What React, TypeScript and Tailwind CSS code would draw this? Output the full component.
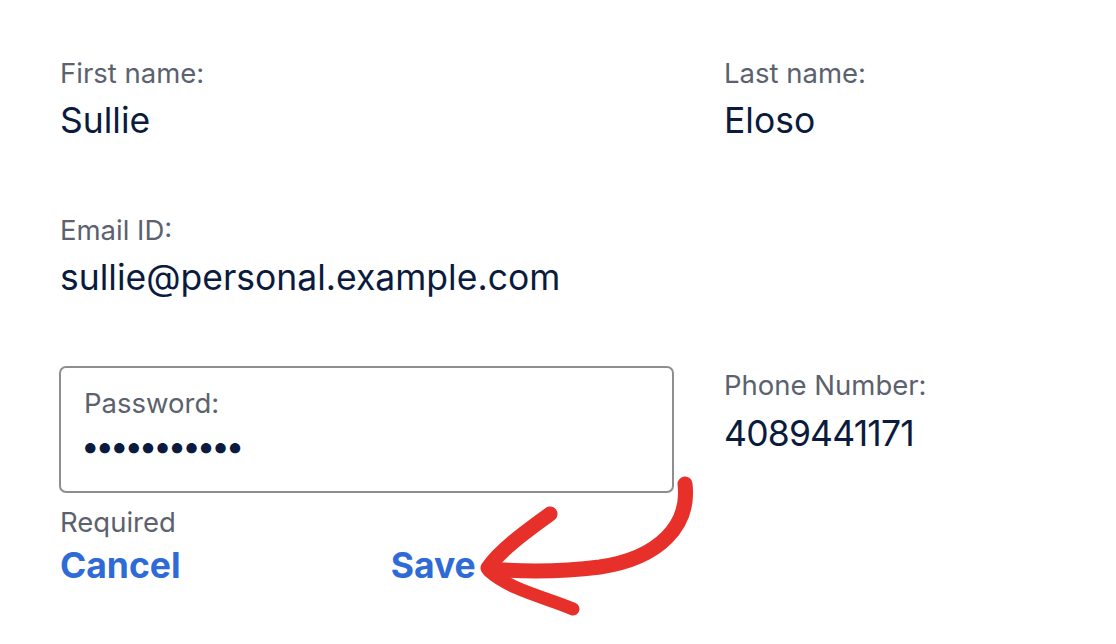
import React from "react";

function Field({ label, value }: { label: string; value: string }) {
  return (
    <div className="flex flex-col">
      <div className="text-[27.5px] leading-[30px] text-[#5b626e]">{label}</div>
      <div className="mt-[13px] text-[35.5px] leading-[40px] text-[#0a1b3d]">{value}</div>
    </div>
  );
}

export default function App() {
  return (
    <div
      className="relative w-[1116px] h-[644px] bg-white overflow-hidden"
      style={{ fontFamily: "Inter, 'Noto Sans', sans-serif" }}
    >
      <div className="flex flex-col pl-[60px] pt-[58px]">
        <div className="grid grid-cols-[664px_1fr]">
          <Field label="First name:" value="Sullie" />
          <Field label="Last name:" value="Eloso" />
        </div>
        <div className="mt-[74px]">
          <Field label="Email ID:" value="sullie@personal.example.com" />
        </div>
        <div className="mt-[68px] grid grid-cols-[664px_1fr]">
          <div className="flex flex-col">
            <div className="ml-[-1px] w-[615px] h-[127px] rounded-[7px] border-2 border-[#8e8e8e] pl-[23px] pt-[20px]">
              <div className="text-[27.5px] leading-[30px] text-[#5b626e]">Password:</div>
              <div className="mt-[10px] ml-[-3px] text-[33px] leading-[36px] tracking-[-4.1px] text-[#0a1b3d]">
                •••••••••••
              </div>
            </div>
            <div className="mt-[14px] text-[27.5px] leading-[30px] text-[#5b626e]">Required</div>
            <div className="mt-[9px] flex items-center text-[35.5px] leading-[40px] font-bold text-[#2e6bd6]">
              <span>Cancel</span>
              <span className="ml-[210px]">Save</span>
            </div>
          </div>
          <div className="pt-[4px]">
            <div className="flex flex-col">
              <div className="text-[27.5px] leading-[30px] text-[#5b626e]">Phone Number:</div>
              <div className="mt-[14px] text-[35.5px] leading-[40px] tracking-[-0.8px] text-[#0a1b3d]">4089441171</div>
            </div>
          </div>
        </div>
      </div>
      <svg
        className="absolute inset-0 pointer-events-none"
        width="1116"
        height="644"
        viewBox="0 0 1116 644"
      >
        <g fill="none" stroke="#e8302a" strokeLinecap="round" strokeLinejoin="round">
          <path d="M685 484 C 690 525, 660 558, 600 567 C 560 572, 525 572, 489 569" strokeWidth="15" />
          <path d="M550 514 C 528 530, 500 550, 488 568" strokeWidth="15" />
          <path d="M489 571 C 510 590, 548 598, 573 609" strokeWidth="13" />
        </g>
      </svg>
    </div>
  );
}
